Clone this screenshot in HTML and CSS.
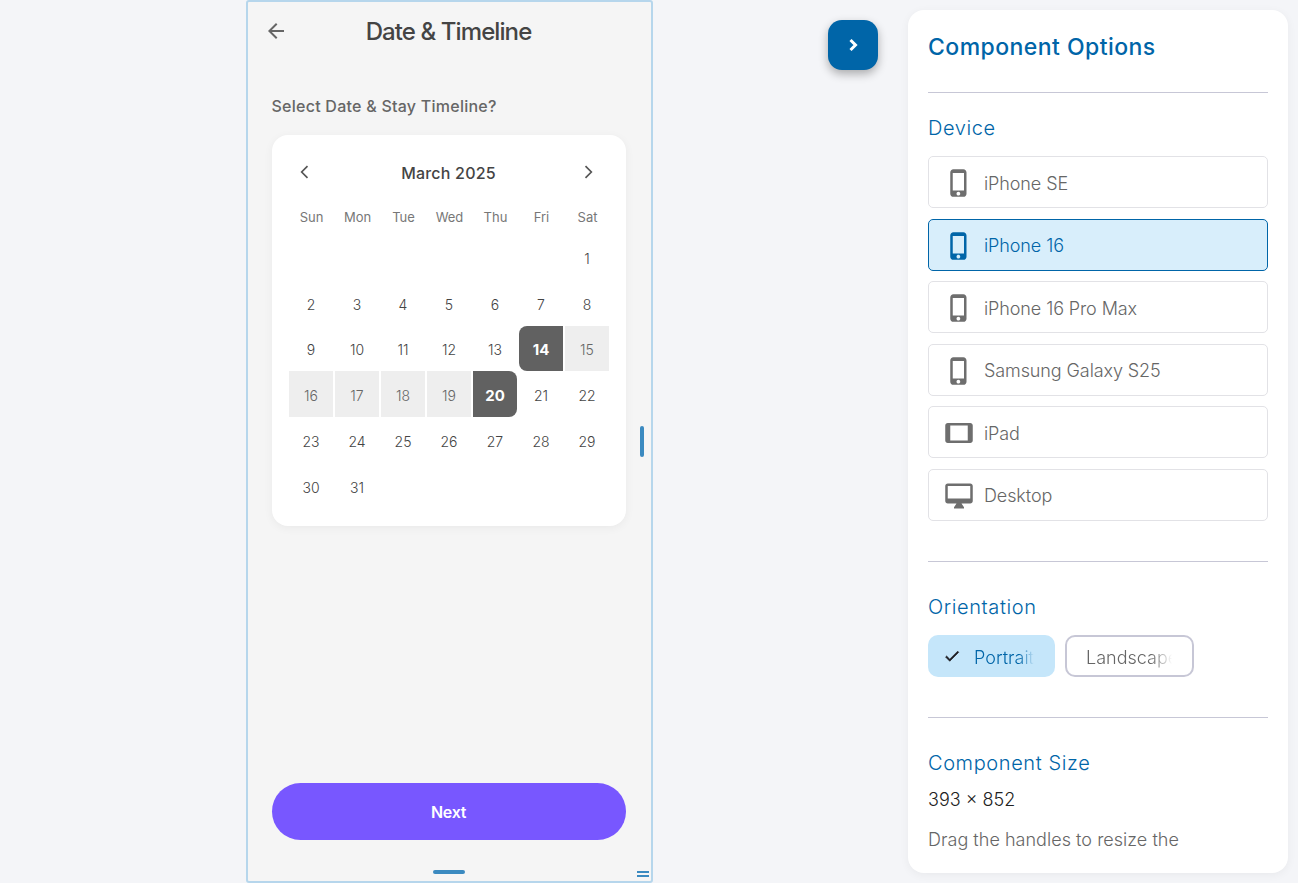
FILE: index.html
```html
<!DOCTYPE html>
<html lang="en">
<head>
    <meta charset="UTF-8">
    <meta name="viewport" content="width=device-width, initial-scale=1.0">
    <title>Component Preview</title>
    <link rel="stylesheet" href="styles.css">
</head>
<body>
    <main class="stage">
        <button class="collapse">
            <svg viewBox="0 0 24 24" width="24" height="24"><path d="M9.5 7l5 5-5 5"/></svg>
        </button>

        <section class="phone">
            <header class="phone-head">
                <svg class="back" viewBox="0 0 24 24" width="24" height="24"><path d="M20 11H7.83l5.59-5.59L12 4l-8 8 8 8 1.41-1.41L7.83 13H20z"/></svg>
                <h1>Date &amp; Timeline</h1>
            </header>

            <p class="question">Select Date &amp; Stay Timeline?</p>

            <div class="calendar">
                <div class="cal-head">
                    <svg viewBox="0 0 24 24" width="20" height="20"><path d="M15 5 8 12l7 7" /></svg>
                    <span>March 2025</span>
                    <svg viewBox="0 0 24 24" width="20" height="20"><path d="M9 5l7 7-7 7" /></svg>
                </div>
                <div class="weekdays">
                    <span>Sun</span><span>Mon</span><span>Tue</span><span>Wed</span><span>Thu</span><span>Fri</span><span>Sat</span>
                </div>
                <div class="days">
                    <span></span><span></span><span></span><span></span><span></span><span></span><span>1</span>
                    <span>2</span><span>3</span><span>4</span><span>5</span><span>6</span><span>7</span><span>8</span>
                    <span>9</span><span>10</span><span>11</span><span>12</span><span>13</span><span class="picked start">14</span><span class="range">15</span>
                    <span class="range">16</span><span class="range">17</span><span class="range">18</span><span class="range">19</span><span class="picked end">20</span><span>21</span><span>22</span>
                    <span>23</span><span>24</span><span>25</span><span>26</span><span>27</span><span>28</span><span>29</span>
                    <span>30</span><span>31</span>
                </div>
            </div>

            <button class="next">Next</button>

            <!-- resize handles -->
            <i class="handle handle-right"></i>
            <i class="handle handle-bottom"></i>
            <i class="handle-corner"></i>
        </section>
    </main>

    <aside class="panel">
        <h2>Component Options</h2>
        <hr>

        <h3>Device</h3>
        <div class="devices">
            <button class="device">
                <svg viewBox="0 0 24 24"><path d="M15.5 1h-8C6.12 1 5 2.12 5 3.5v17C5 21.88 6.12 23 7.5 23h8c1.38 0 2.5-1.12 2.5-2.5v-17C18 2.12 16.88 1 15.5 1zm-4 21c-.83 0-1.5-.67-1.5-1.5s.67-1.5 1.5-1.5 1.5.67 1.5 1.5-.67 1.5-1.5 1.5zm4.5-4H7V4h9v14z"/></svg>
                iPhone SE
            </button>
            <button class="device active">
                <svg viewBox="0 0 24 24"><path d="M15.5 1h-8C6.12 1 5 2.12 5 3.5v17C5 21.88 6.12 23 7.5 23h8c1.38 0 2.5-1.12 2.5-2.5v-17C18 2.12 16.88 1 15.5 1zm-4 21c-.83 0-1.5-.67-1.5-1.5s.67-1.5 1.5-1.5 1.5.67 1.5 1.5-.67 1.5-1.5 1.5zm4.5-4H7V4h9v14z"/></svg>
                iPhone 16
            </button>
            <button class="device">
                <svg viewBox="0 0 24 24"><path d="M15.5 1h-8C6.12 1 5 2.12 5 3.5v17C5 21.88 6.12 23 7.5 23h8c1.38 0 2.5-1.12 2.5-2.5v-17C18 2.12 16.88 1 15.5 1zm-4 21c-.83 0-1.5-.67-1.5-1.5s.67-1.5 1.5-1.5 1.5.67 1.5 1.5-.67 1.5-1.5 1.5zm4.5-4H7V4h9v14z"/></svg>
                iPhone 16 Pro Max
            </button>
            <button class="device">
                <svg viewBox="0 0 24 24"><path d="M15.5 1h-8C6.12 1 5 2.12 5 3.5v17C5 21.88 6.12 23 7.5 23h8c1.38 0 2.5-1.12 2.5-2.5v-17C18 2.12 16.88 1 15.5 1zm-4 21c-.83 0-1.5-.67-1.5-1.5s.67-1.5 1.5-1.5 1.5.67 1.5 1.5-.67 1.5-1.5 1.5zm4.5-4H7V4h9v14z"/></svg>
                Samsung Galaxy S25
            </button>
            <button class="device">
                <svg viewBox="0 0 24 24"><path d="M21 4H3c-1.1 0-2 .9-2 2v12c0 1.1.9 2 2 2h18c1.1 0 2-.9 2-2V6c0-1.1-.9-2-2-2zm-2 14H5V6h14v12z"/></svg>
                iPad
            </button>
            <button class="device">
                <svg viewBox="0 0 24 24"><path d="M21 2H3c-1.1 0-2 .9-2 2v12c0 1.1.9 2 2 2h7l-2 3v1h8v-1l-2-3h7c1.1 0 2-.9 2-2V4c0-1.1-.9-2-2-2zm0 12H3V4h18v10z"/></svg>
                Desktop
            </button>
        </div>
        <hr class="wide">

        <h3>Orientation</h3>
        <div class="chips">
            <button class="chip chip-on">
                <svg viewBox="0 0 24 24" width="18" height="18"><path d="M9 16.17 4.83 12l-1.42 1.41L9 19 21 7l-1.41-1.41z"/></svg>
                <span>Portrait</span>
            </button>
            <button class="chip chip-off"><span>Landscape</span></button>
        </div>
        <hr class="last">

        <h3>Component Size</h3>
        <p class="size">393 × 852</p>
        <p class="hint">Drag the handles to resize the</p>
    </aside>
</body>
</html>
```

FILE: styles.css
```css
* {
    box-sizing: border-box;
}

body {
    margin: 0;
    height: 883px;
    overflow: hidden;
    display: flex;
    font-family: "Inter", "Liberation Sans", sans-serif;
    background: #f4f5f8;
}

button {
    font-family: inherit;
}

.stage {
    position: relative;
    width: 898px;
    display: flex;
    justify-content: center;
}

.collapse {
    position: absolute;
    top: 20px;
    left: 828px;
    width: 50px;
    height: 50px;
    padding: 0;
    border: none;
    border-radius: 14px;
    background: #0065a8;
    box-shadow: 0 4px 10px rgba(0, 0, 0, 0.3);
    display: flex;
    align-items: center;
    justify-content: center;
}

.collapse path {
    fill: none;
    stroke: #fff;
    stroke-width: 3;
}

/* phone frame */
.phone {
    position: relative;
    width: 407px;
    height: 883px;
    padding: 0 25px 0 24px;
    border: 2px solid #b6d6ec;
    border-radius: 3px;
    background: #f5f5f5;
    display: flex;
    flex-direction: column;
}

.phone-head {
    position: relative;
    height: 58px;
    display: flex;
    align-items: center;
    justify-content: center;
}

.phone-head h1 {
    margin: 0;
    font-size: 24px;
    font-weight: 500;
    letter-spacing: -0.9px;
    color: #444;
}

.back {
    position: absolute;
    left: -8px;
    top: 17px;
    fill: #666;
}

.question {
    margin: 35px 0 18px;
    height: 22px;
    line-height: 22px;
    font-size: 16px;
    font-weight: 500;
    letter-spacing: 0.25px;
    color: #666;
}

.calendar {
    height: 391px;
    padding: 20px 16px 0;
    border-radius: 16px;
    background: #fff;
    box-shadow: 0 2px 10px rgba(0, 0, 0, 0.05);
}

.cal-head {
    height: 36px;
    padding: 0 11px 0 7px;
    display: flex;
    align-items: center;
    justify-content: space-between;
}

.cal-head span {
    margin-left: 4px;
    font-size: 16px;
    font-weight: 500;
    letter-spacing: 0.2px;
    color: #444;
}

.cal-head svg {
    margin-top: -2px;
    fill: none;
    stroke: #555;
    stroke-width: 2;
}

.weekdays,
.days {
    display: grid;
    grid-template-columns: repeat(7, 46px);
}

.weekdays {
    margin-top: 14px;
    padding-left: 1px;
    height: 24px;
    text-align: center;
    line-height: 24px;
    font-size: 13px;
    font-weight: 400;
    color: #777;
}

.days {
    margin-top: 5px;
    grid-auto-rows: 45.8px;
    font-size: 14px;
    font-weight: 300;
    color: #444;
}

.days span {
    margin: 0 1px;
    padding: 3px 0 0 1px;
    display: flex;
    align-items: center;
    justify-content: center;
}

.days .range {
    background: #eee;
    color: #666;
}

.days .picked {
    background: #616161;
    color: #fff;
    font-size: 15px;
    font-weight: 700;
}

.start {
    border-radius: 8px 0 0 8px;
}

.end {
    border-radius: 0 8px 8px 0;
}

.next {
    margin-top: auto;
    margin-bottom: 41px;
    height: 57px;
    border: none;
    border-radius: 29px;
    background: #7857ff;
    color: #fff;
    font-size: 16px;
    font-weight: 600;
    letter-spacing: -0.3px;
}

.handle {
    position: absolute;
    background: #3b8ac0;
    border-radius: 2px;
}

.handle-right {
    top: 424px;
    right: 7px;
    width: 4px;
    height: 31px;
}

.handle-bottom {
    bottom: 7px;
    left: 185px;
    width: 32px;
    height: 4px;
}

.handle-corner {
    position: absolute;
    right: 2px;
    bottom: 4px;
    width: 12px;
    height: 6px;
    border-top: 2px solid #3b8ac0;
    border-bottom: 2px solid #3b8ac0;
}

/* options panel */
.panel {
    margin: 10px;
    width: 380px;
    height: 863px;
    overflow: hidden;
    padding: 0 20px;
    border-radius: 16px;
    background: #fff;
    box-shadow: 0 2px 10px rgba(0, 0, 0, 0.05);
}

.panel h2 {
    margin: 21px 0 0;
    line-height: 32px;
    font-size: 23px;
    font-weight: 500;
    letter-spacing: 0.45px;
    color: #0065a8;
}

.panel hr {
    margin: 29px 0 0;
    border: none;
    border-top: 1px solid #c7c7d6;
}

.panel h3 {
    margin: 21px 0 0;
    line-height: 28px;
    font-size: 20px;
    font-weight: 300;
    letter-spacing: 0.6px;
    color: #0065a8;
}

.devices {
    margin-top: 14px;
    display: flex;
    flex-direction: column;
    gap: 10.6px;
}

.device {
    height: 52px;
    padding: 2px 0 0 15px;
    display: flex;
    align-items: center;
    gap: 10px;
    border: 1px solid #e2e2e6;
    border-radius: 5px;
    background: #fff;
    font-size: 18px;
    font-weight: 300;
    letter-spacing: -0.1px;
    color: #666;
}

.device svg {
    width: 30px;
    height: 30px;
    fill: #6e6e6e;
}

.device.active {
    border-color: #0065a8;
    background: #d8eefb;
    color: #0065a8;
}

.active svg {
    fill: #0065a8;
}

.panel .wide {
    margin-top: 40px;
}

.panel .wide + h3 {
    margin-top: 31px;
}

.chips {
    margin-top: 14px;
    display: flex;
    gap: 10px;
}

.chip {
    height: 42px;
    display: flex;
    align-items: center;
    border-radius: 10px;
    font-size: 18px;
    font-weight: 300;
}

.chip span {
    padding-top: 3px;
    overflow: hidden;
    white-space: nowrap;
    -webkit-mask-image: linear-gradient(to right, #000 75%, transparent);
    mask-image: linear-gradient(to right, #000 75%, transparent);
}

.chip-on {
    width: 127px;
    padding: 0 0 0 15px;
    gap: 13px;
    border: none;
    background: #c5e6fa;
    color: #0065a8;
}

.chip-on svg {
    flex: none;
    fill: #1d1b20;
    stroke: #1d1b20;
    stroke-width: 0.8;
}

.chip-on span {
    width: 60px;
}

.chip-off {
    width: 129px;
    padding: 0 0 0 19px;
    border: 2px solid #c7c7d6;
    background: #fff;
    color: #666;
}

.chip-off span {
    width: 86px;
}

.panel .last {
    margin-top: 40px;
}

.panel .last + h3 {
    margin-top: 31px;
}

.size {
    margin: 10px 0 0;
    line-height: 26px;
    font-size: 18px;
    font-weight: 300;
    color: #222;
}

.hint {
    margin: 14px 0 0;
    line-height: 26px;
    font-size: 18px;
    font-weight: 300;
    letter-spacing: 0.03px;
    color: #666;
}
```
